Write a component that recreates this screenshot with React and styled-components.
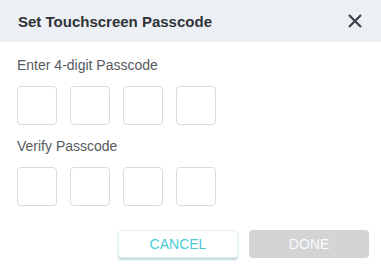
import React from 'react';
import styled, { createGlobalStyle } from 'styled-components';

const GlobalStyle = createGlobalStyle`
	body {
		margin: 0;
		background: #ffffff;
		font-family: "Liberation Sans", Arial, sans-serif;
	}
`;

const Dialog = styled.div`
	width: 381px;
	height: 267px;
	background: #ffffff;
	display: flex;
	flex-direction: column;
`;

const Header = styled.div`
	height: 42px;
	background: #eceff3;
	display: flex;
	align-items: center;
	justify-content: space-between;
	padding: 0 18px;
	box-sizing: border-box;
`;

const Title = styled.h1`
	margin: 0;
	font-size: 15px;
	font-weight: bold;
	color: #2f3338;
`;

const CloseButton = styled.button`
	border: none;
	background: none;
	padding: 0;
	width: 16px;
	height: 16px;
	display: flex;
	cursor: pointer;
`;

const Body = styled.div`
	padding: 15px 17px 0;
	display: flex;
	flex-direction: column;
`;

const Label = styled.div`
	font-size: 14px;
	line-height: 16px;
	color: #555a60;
	margin-bottom: 13px;
`;

const Digits = styled.div`
	display: flex;
	gap: 13px;
	margin-bottom: ${(p) => p.spacing}px;
`;

const DigitBox = styled.input`
	width: 40px;
	height: 39px;
	box-sizing: border-box;
	border: 1px solid #d9dbde;
	border-radius: 4px;
	outline: none;
	text-align: center;
`;

const Footer = styled.div`
	display: flex;
	justify-content: flex-end;
	gap: 11px;
	padding: 0 12px;
	margin-top: 24px;
`;

const Button = styled.button`
	width: 120px;
	height: 28px;
	border-radius: 4px;
	font-family: "Liberation Sans", Arial, sans-serif;
	font-size: 14px;
	cursor: pointer;
	border: ${(p) => (p.primary ? 'none' : '1px solid #e4f1f3')};
	background: ${(p) => (p.primary ? '#d3d4d6' : '#ffffff')};
	color: ${(p) => (p.primary ? '#fafafa' : '#4acbd6')};
	box-shadow: ${(p) => (p.primary ? 'none' : '0 2px 2px rgba(70, 140, 150, 0.35)')};
`;

const DigitRow = ({ spacing }) => (
	<Digits spacing={spacing}>
		{[0, 1, 2, 3].map((i) => (
			<DigitBox key={i} type="password" maxLength={1} />
		))}
	</Digits>
);

function App() {
	return (
		<>
			<GlobalStyle />
			<Dialog>
				<Header>
					<Title>Set Touchscreen Passcode</Title>
					<CloseButton aria-label="Close">
						<svg width="16" height="16" viewBox="0 0 16 16">
							<path d="M2 2 L14 14 M14 2 L2 14" stroke="#3a4048" strokeWidth="2.2" />
						</svg>
					</CloseButton>
				</Header>
				<Body>
					<Label>Enter 4-digit Passcode</Label>
					<DigitRow spacing={13} />
					<Label>Verify Passcode</Label>
					<DigitRow spacing={0} />
				</Body>
				<Footer>
					<Button>CANCEL</Button>
					<Button primary disabled>DONE</Button>
				</Footer>
			</Dialog>
		</>
	);
}

export default App;
